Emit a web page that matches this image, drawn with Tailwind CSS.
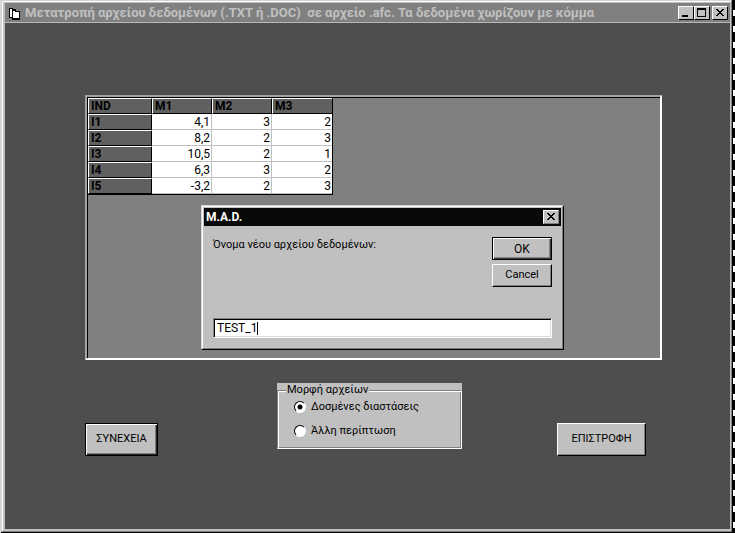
<!DOCTYPE html>
<html lang="el">
<head>
    <meta charset="UTF-8">
    <meta name="viewport" content="width=device-width, initial-scale=1.0">
    <title>M.A.D.</title>
    <script src="https://cdn.jsdelivr.net/npm/@tailwindcss/browser@4"></script>
</head>
<body class="bg-[#4e4e4e] font-[Roboto,'Liberation_Sans',sans-serif] text-xs text-black">

    <div class="flex min-h-screen">
        <div class="w-px bg-[#d8d8d8]"></div>

        <!-- Main window -->
        <div class="flex flex-1 flex-col border-r border-b border-black bg-[#c0c0c0]">
            <div class="flex flex-1 flex-col border-t border-l border-[#d4d4d4] border-r border-b border-r-[#808080] border-b-[#808080]">
                <div class="flex flex-1 flex-col border-t border-l border-white pt-px pl-[2px] pr-px pb-[2px]">

                    <header class="flex h-5 items-center border-b border-[#b8b8b8] bg-[#808080] pl-1 pr-[2px]">
                        <svg class="h-4 w-4 shrink-0" viewBox="0 0 16 16" shape-rendering="crispEdges">
                            <path d="M0 3h4v1h3v9H0z"/>
                            <path d="M1 4h2v1h3v7H1z" fill="#fff"/>
                            <path d="M3 5h4v1h4v9H3z"/>
                            <path d="M4 6h2v1h4v6H4z" fill="#fff"/>
                        </svg>
                        <h1 class="flex-1 overflow-hidden whitespace-pre text-[13px] font-bold text-[#c0c0c0]">Μετατροπή αρχείου δεδομένων (.ΤΧΤ ή .DOC)  σε αρχείο .afc. Τα δεδομένα χωρίζουν με κόμμα</h1>
                        <button aria-label="Ελαχιστοποίηση" class="h-[14px] w-4 border border-t-white border-l-white border-r-black border-b-black bg-[#c0c0c0]">
                            <svg class="h-3 w-[14px]" viewBox="0 0 14 12" shape-rendering="crispEdges"><path d="M3 8h6v2H3z"/></svg>
                        </button>
                        <button aria-label="Μεγιστοποίηση" class="h-[14px] w-4 border border-t-white border-l-white border-r-black border-b-black bg-[#c0c0c0]">
                            <svg class="h-3 w-[14px]" viewBox="0 0 14 12" shape-rendering="crispEdges"><path d="M2 1h9v9H2zM3 3v6h7V3z" fill-rule="evenodd"/></svg>
                        </button>
                        <button aria-label="Κλείσιμο" class="ml-[2px] h-[14px] w-4 border border-t-white border-l-white border-r-black border-b-black bg-[#c0c0c0]">
                            <svg class="h-3 w-[14px]" viewBox="0 0 14 12" shape-rendering="crispEdges"><path d="M3 2h2v1h1v1h2V3h1V2h2v1h-1v1H9v1H8v1h1v1h1v1h1v1H9V8H8V7H6v1H5v1H3V8h1V7h1V6h1V5H5V4H4V3H3z"/></svg>
                        </button>
                    </header>

                    <main class="flex-1 bg-[#4e4e4e] pt-[72px] pr-[68px] pb-16 pl-20">
                        <!-- Data grid -->
                        <section class="relative h-[265px] border-2 border-t-[#a4a4a4] border-l-[#a4a4a4] border-r-white border-b-white bg-[#808080]">
                            <div class="h-full border-t border-l border-black">
                                <table class="w-[245px] table-fixed border-separate border-spacing-0 border-r border-b border-black leading-[14px]">
                                    <thead>
                                        <tr class="h-4 text-left">
                                            <th class="w-16 border border-t-white border-l-white border-r-black border-b-black bg-[#606060] px-[2px]">IND</th>
                                            <th class="w-15 border border-t-white border-l-white border-r-black border-b-black bg-[#606060] px-[2px]">M1</th>
                                            <th class="w-15 border border-t-white border-l-white border-r-black border-b-black bg-[#606060] px-[2px]">M2</th>
                                            <th class="w-15 border border-t-white border-l-white border-r-0 border-b-black bg-[#606060] px-[2px]">M3</th>
                                        </tr>
                                    </thead>
                                    <tbody id="grid-rows"></tbody>
                                </table>
                            </div>

                            <!-- Input dialog -->
                            <form role="dialog" aria-labelledby="dialog-title" class="absolute top-[108px] left-[114px] w-[363px] border border-t-[#d4d4d4] border-l-[#d4d4d4] border-r-black border-b-black">
                                <div class="border border-t-white border-l-white border-r-[#808080] border-b-[#808080] bg-[#c0c0c0] p-px">
                                    <div class="flex h-[18px] items-center justify-between bg-[#080808] pr-[2px] pl-[2px]">
                                        <h2 id="dialog-title" class="font-bold text-white">M.A.D.</h2>
                                        <button type="button" aria-label="Κλείσιμο" class="h-[14px] w-4 border border-t-white border-l-white border-r-[#808080] border-b-[#808080] bg-[#c0c0c0]">
                                            <svg class="h-3 w-[14px]" viewBox="0 0 14 12" shape-rendering="crispEdges"><path d="M3 2h2v1h1v1h2V3h1V2h2v1h-1v1H9v1H8v1h1v1h1v1h1v1H9V8H8V7H6v1H5v1H3V8h1V7h1V6h1V5H5V4H4V3H3z"/></svg>
                                        </button>
                                    </div>
                                    <div class="px-[9px] pt-[11px] pb-[9px]">
                                        <div class="flex justify-between">
                                            <label for="file-name" class="text-[11px] leading-4">Όνομα νέου αρχείου δεδομένων:</label>
                                            <div class="flex flex-col gap-1">
                                                <button type="submit" class="h-[23px] w-[60px] border border-black bg-[#c0c0c0] shadow-[inset_1px_1px_#fff,inset_-1px_-1px_#404040,inset_-2px_-2px_#808080]">OK</button>
                                                <button type="button" class="h-[23px] w-[60px] border border-t-white border-l-white border-r-black border-b-black bg-[#c0c0c0] text-[11px] shadow-[inset_-1px_-1px_#808080]">Cancel</button>
                                            </div>
                                        </div>
                                        <div class="mt-[31px] flex h-5 items-center border border-t-[#808080] border-l-[#808080] border-r-white border-b-white bg-white shadow-[inset_1px_1px_#000,inset_-1px_-1px_#dcdcdc]">
                                            <input id="file-name" type="text" value="TEST_1" class="field-sizing-content bg-transparent pl-[3px] caret-transparent outline-none">
                                            <span class="h-[13px] w-px bg-black"></span>
                                        </div>
                                    </div>
                                </div>
                            </form>
                        </section>

                        <div class="mt-[23px] flex items-start text-[11px]">
                            <button class="mt-10 h-[33px] w-[73px] border border-black bg-[#c0c0c0] shadow-[inset_1px_1px_#fff,inset_-1px_-1px_#202020,inset_-2px_-2px_#808080]">ΣΥΝΕΧΕΙΑ</button>

                            <div class="ml-[119px] w-[185px] bg-[#c0c0c0]">
                                <fieldset class="border border-t-[#808080] border-l-[#808080] border-r-white border-b-white px-2 pb-[9px] shadow-[inset_1px_1px_#fff,inset_-1px_-1px_#808080]">
                                    <legend class="bg-[#c0c0c0] px-px leading-[14px]">Μορφή αρχείων</legend>
                                    <div class="flex flex-col gap-2 pt-[2px] pl-2">
                                        <label class="flex items-center gap-[5px] leading-4">
                                            <input type="radio" name="format" checked class="h-3 w-3 appearance-none rounded-full border border-t-black border-l-black border-r-white border-b-white bg-white bg-[radial-gradient(circle,#000_2px,transparent_3px)]">
                                            Δοσμένες διαστάσεις
                                        </label>
                                        <label class="flex items-center gap-[5px] leading-4">
                                            <input type="radio" name="format" class="h-3 w-3 appearance-none rounded-full border border-t-black border-l-black border-r-white border-b-white bg-white">
                                            Άλλη περίπτωση
                                        </label>
                                    </div>
                                </fieldset>
                            </div>

                            <button class="mt-10 mr-4 ml-auto h-[33px] w-[89px] border border-t-white border-l-white border-r-black border-b-black bg-[#c0c0c0] shadow-[inset_-1px_-1px_#808080]">ΕΠΙΣΤΡΟΦΗ</button>
                        </div>
                    </main>
                </div>
            </div>
        </div>

        <div class="w-[2px] bg-[repeating-linear-gradient(#000_0px_10px,#fff_10px_16px)]"></div>
    </div>

    <template id="row-template">
        <tr class="h-4">
            <th class="border border-t-white border-l-white border-r-black border-b-black bg-[#606060] px-[2px] text-left"></th>
            <td class="border-r border-b border-[#c0c0c0] bg-white px-px text-right"></td>
            <td class="border-r border-b border-[#c0c0c0] bg-white px-px text-right"></td>
            <td class="border-b border-[#c0c0c0] bg-white px-px text-right"></td>
        </tr>
    </template>

    <script>
        const rows = [
            ['I1', '4,1', '3', '2'],
            ['I2', '8,2', '2', '3'],
            ['I3', '10,5', '2', '1'],
            ['I4', '6,3', '3', '2'],
            ['I5', '-3,2', '2', '3']
        ];
        const gridRows = document.getElementById('grid-rows');
        const rowTemplate = document.getElementById('row-template');

        rows.forEach(row => {
            const tr = rowTemplate.content.cloneNode(true);
            tr.querySelectorAll('th, td').forEach((cell, i) => cell.textContent = row[i]);
            gridRows.appendChild(tr);
        });
    </script>
</body>
</html>
